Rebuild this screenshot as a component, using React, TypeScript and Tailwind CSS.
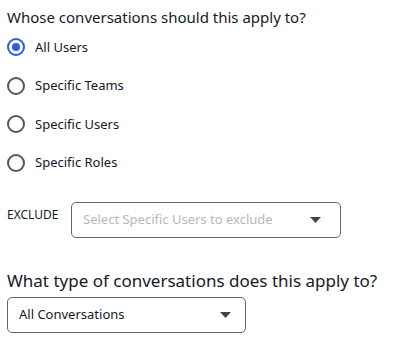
import React, { useState } from 'react';

const OPTIONS = ['All Users', 'Specific Teams', 'Specific Users', 'Specific Roles'];

const Caret = () => (
    <svg width="11" height="6" viewBox="0 0 11 6" className="shrink-0">
        <path d="M0 0 L11 0 L5.5 6 Z" fill="#444" />
    </svg>
);

const Radio: React.FC<{ checked: boolean }> = ({ checked }) => (
    <span
        className={`flex h-[18px] w-[18px] shrink-0 items-center justify-center rounded-full border-2 ${checked ? 'border-[#2a5bf0]' : 'border-[#555]'}`}
    >
        {checked && <span className="h-[8px] w-[8px] rounded-full bg-[#2a5bf0]" />}
    </span>
);

export default function App() {
    const [selected, setSelected] = useState('All Users');

    return (
        <div className="w-[398px] h-[342px] bg-white px-[7px] pt-[6px] text-[#16191f] font-['Noto_Sans',sans-serif]">
            <h3 className="text-[15px] leading-[22px]">Whose conversations should this apply to?</h3>

            <div className="flex flex-col">
                {OPTIONS.map(opt => (
                    <label
                        key={opt}
                        className="flex h-[38.5px] cursor-pointer items-center gap-[10px]"
                        onClick={() => setSelected(opt)}
                    >
                        <Radio checked={selected === opt} />
                        <span className="text-[13px]">{opt}</span>
                    </label>
                ))}
            </div>

            <div className="mt-[20px] flex items-start gap-[12px]">
                <span className="pt-[4px] text-[12px] w-[52px]">EXCLUDE</span>
                <div className="flex h-[36px] w-[270px] items-center justify-between rounded-[5px] border border-[#666] pl-[11px] pr-[19px]">
                    <span className="text-[13px] text-[#b8b8b8]">Select Specific Users to exclude</span>
                    <Caret />
                </div>
            </div>

            <h3 className="mt-[32px] text-[17px] leading-[22px]">What type of conversations does this apply to?</h3>

            <div className="mt-[5px] flex h-[36px] w-[239px] items-center justify-between rounded-[5px] border border-[#666] pl-[11px] pr-[14px]">
                <span className="text-[13px]">All Conversations</span>
                <Caret />
            </div>
        </div>
    );
}
